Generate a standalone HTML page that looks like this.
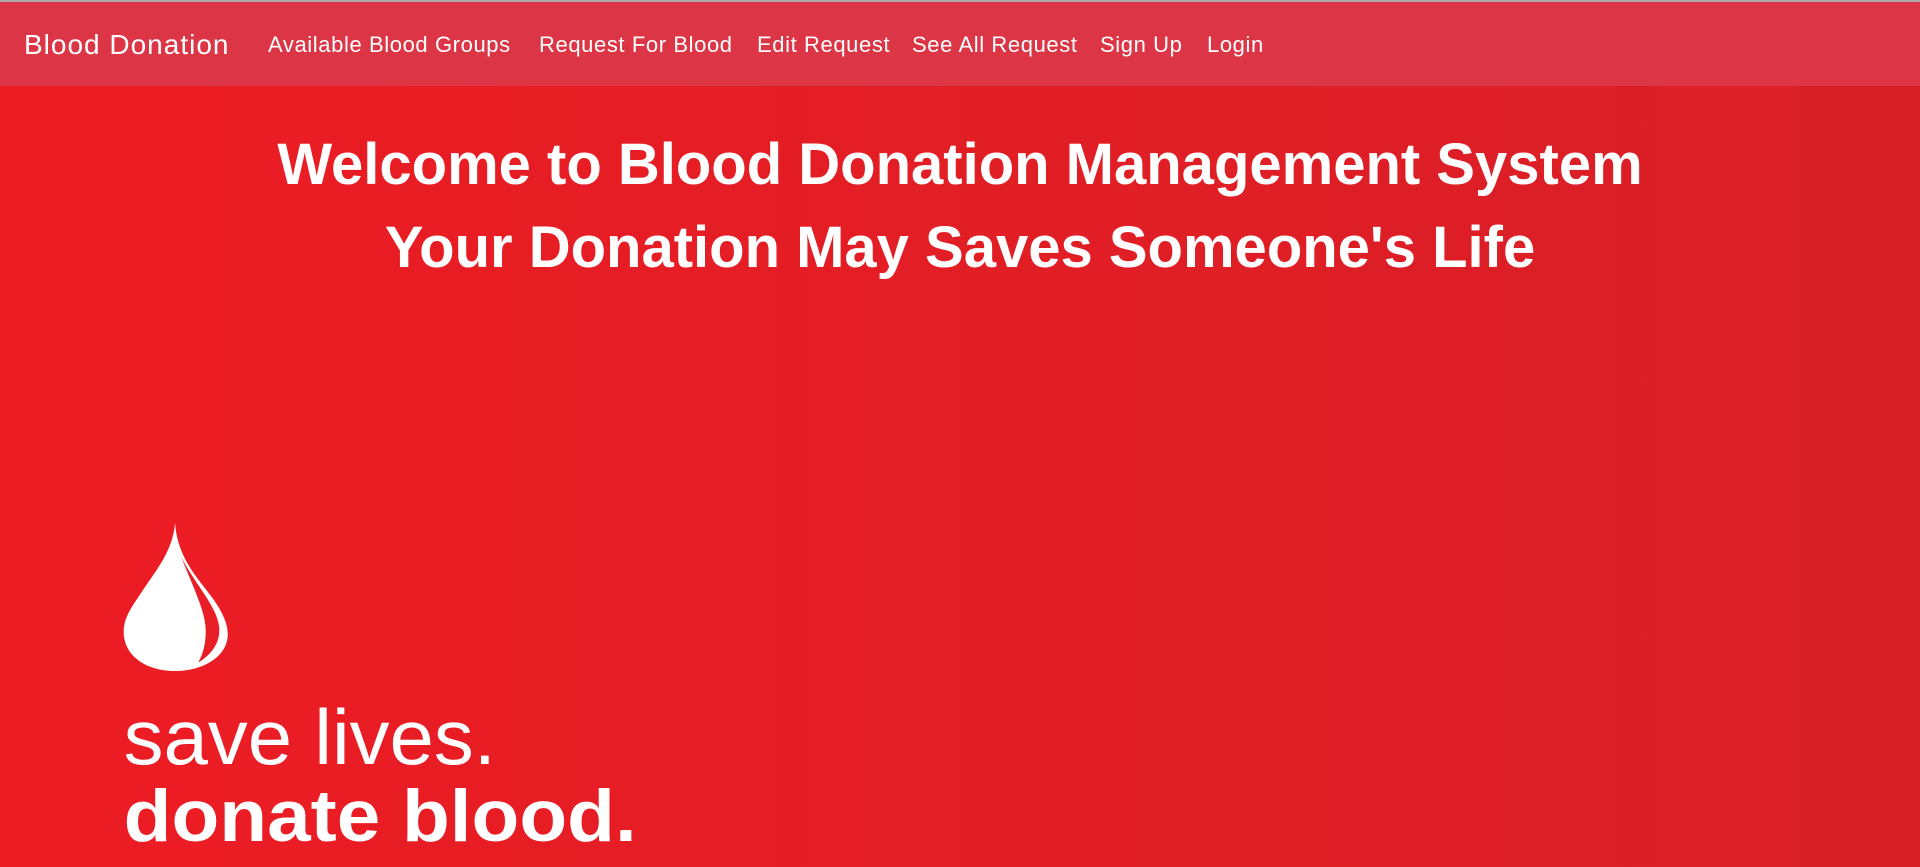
<!DOCTYPE html>
<html><head><meta charset="utf-8"><style>
html,body{margin:0;padding:0;width:1920px;height:867px;overflow:hidden;font-family:"Liberation Sans",sans-serif}
body{background:linear-gradient(90deg,#ed1c24 0%,#d81f26 100%);position:relative}
.nav{position:absolute;left:0;top:0;width:1920px;height:86px;background:#dc3545;border-top:2px solid #a9a9a9;box-sizing:border-box}
.nav span{position:absolute;color:#fff;white-space:nowrap;top:30px;font-size:22px;letter-spacing:0.6px}
.nav .brand{font-size:28px;top:27px;left:24px;letter-spacing:1px}
h1{position:absolute;left:0;width:1920px;text-align:center;color:#fff;font-weight:bold;font-size:58px;margin:0;line-height:1}
</style></head><body>
<div class="nav">
<span class="brand">Blood Donation</span>
<span style="left:268px">Available Blood Groups</span>
<span style="left:539px">Request For Blood</span>
<span style="left:757px">Edit Request</span>
<span style="left:912px">See All Request</span>
<span style="left:1100px">Sign Up</span>
<span style="left:1207px">Login</span>
</div>
<h1 style="top:136px">Welcome to Blood Donation Management System</h1>
<h1 style="top:219px">Your Donation May Saves Someone's Life</h1>
<svg style="position:absolute;left:0;top:0" width="1920" height="867" viewBox="0 0 1568 708">
<path d="M143 427 C145 460 168 478 178 495 C184 505 186 512 186 518 C186 536 166 548 143 548 C120 548 101 536 101 516 C101 504 108 495 116 483 C128 465 141 450 143 427 Z" fill="#fff"/>
<path d="M148 455 C158 480 168 500 168 515 C168 528 165 535 162 541 C175 533 180 523 179 512 C177 495 160 478 148 455 Z" fill="#e91f27"/>
<text x="101" y="624" font-family="Liberation Sans" font-size="64" fill="#fff" textLength="304" lengthAdjust="spacingAndGlyphs">save lives.</text>
<text x="101" y="687" font-family="Liberation Sans" font-weight="bold" font-size="60" fill="#fff" textLength="419" lengthAdjust="spacingAndGlyphs">donate blood.</text>
</svg>
</body></html>
